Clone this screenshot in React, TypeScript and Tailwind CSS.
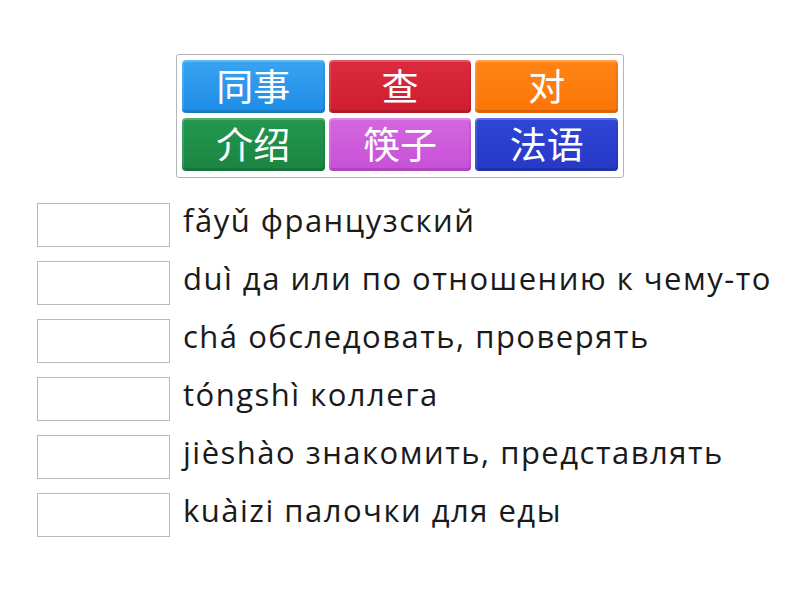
const tiles = [
  { text: "同事", cls: "bg-gradient-to-b from-[#3aa4f2] to-[#1c8ce6]" },
  { text: "查", cls: "bg-gradient-to-b from-[#dc2a3e] to-[#cf1c30]" },
  { text: "对", cls: "bg-gradient-to-b from-[#ff8516] to-[#fb7406]" },
  { text: "介绍", cls: "bg-gradient-to-b from-[#23994e] to-[#1b8442]" },
  { text: "筷子", cls: "bg-gradient-to-b from-[#d468e0] to-[#c64fd6]" },
  { text: "法语", cls: "bg-gradient-to-b from-[#3046d6] to-[#2638c6]" },
];

const rows = [
  "fǎyǔ французский",
  "duì да или по отношению к чему-то",
  "chá обследовать, проверять",
  "tóngshì коллега",
  "jièshào знакомить, представлять",
  "kuàizi палочки для еды",
];

export default function App() {
  return (
    <div className="w-[800px] h-[600px] bg-white font-['Open_Sans','Noto_Sans_CJK_SC',sans-serif] text-[#1a1a1a]">
      <div className="pt-[54px] flex justify-center">
        <div className="w-[448px] border border-[#b5b5b5] rounded-[3px] pt-[5px] pb-[6px] px-[5px] grid grid-cols-3 gap-x-[4px] gap-y-[5px]">
          {tiles.map((t) => (
            <div
              key={t.text}
              className={`${t.cls} h-[53px] rounded-[4px] flex items-center justify-center text-white text-[37px] leading-none font-['Noto_Sans_CJK_SC',sans-serif] shadow-[inset_0_2px_0_rgba(255,255,255,0.22),inset_0_-3px_0_rgba(0,0,0,0.12),inset_2px_0_0_rgba(255,255,255,0.12),inset_-2px_0_0_rgba(0,0,0,0.06)]`}
            >
              <span className="-mt-[2px]">{t.text}</span>
            </div>
          ))}
        </div>
      </div>
      <div className="mt-[25px] pl-[37px] flex flex-col gap-[14px]">
        {rows.map((r) => (
          <div key={r} className="flex items-center gap-[13px]">
            <div className="w-[133px] h-[44px] border border-[#b8b8b8] bg-white shrink-0" />
            <span className="text-[31px] leading-none tracking-[1.5px] -mt-[10px] whitespace-nowrap">{r}</span>
          </div>
        ))}
      </div>
    </div>
  );
}
